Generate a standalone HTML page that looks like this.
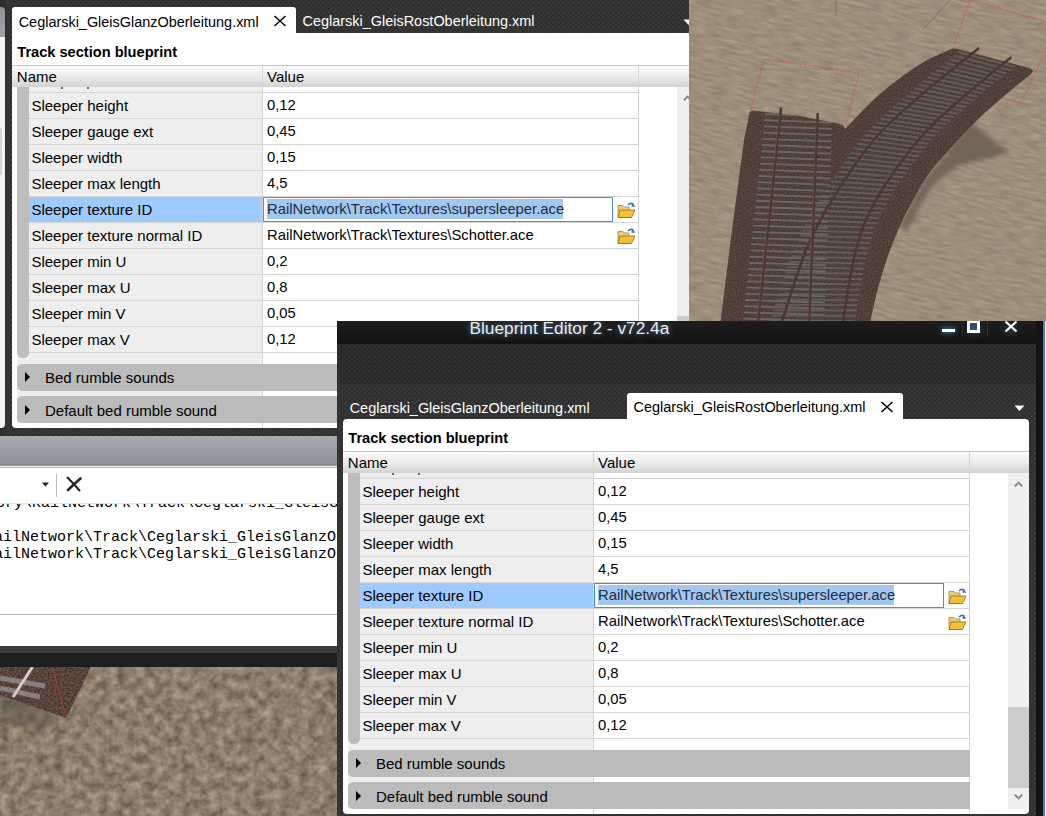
<!DOCTYPE html>
<html><head><meta charset="utf-8"><style>
html,body{margin:0;padding:0;width:1046px;height:816px;overflow:hidden;background:#2d2d2d;}
body div{position:absolute;}
.t{white-space:pre;font-family:"Liberation Sans",sans-serif;}
</style></head><body>
<div style="left:0px;top:0px;width:1046px;height:816px;background:#2d2d2d;"></div><div style="left:0px;top:7px;width:5px;height:30px;background:linear-gradient(#8e9399,#a0a4aa);border-radius:0 4px 0 0;"></div><div style="left:0px;top:37px;width:5px;height:391px;background:#f4f4f4;border-radius:0 0 4px 0;"></div><div style="left:0px;top:128px;width:2px;height:47px;background:#d6d6d6;"></div><div style="left:0;top:0;width:690px;height:435px;overflow:hidden"><div style="left:6px;top:-65px;width:699px;height:509px;background-color:#2c2c2c;background-image:radial-gradient(circle,#3b3b3b 0.9px,transparent 1.7px),radial-gradient(circle,#3b3b3b 0.9px,transparent 1.7px);background-size:5px 5px;background-position:0 0,2.5px 2.5px;"></div><div style="left:6px;top:-42px;width:699px;height:40px;background-color:#262626;background-image:radial-gradient(circle,#333 0.9px,transparent 1.7px),radial-gradient(circle,#333 0.9px,transparent 1.7px);background-size:5px 5px;background-position:0 0,2.5px 2.5px;"></div><div style="left:705px;top:-65px;width:7px;height:509px;background:#131313;"></div><div style="left:6px;top:-65px;width:699px;height:23px;background:linear-gradient(#1d1d1d,#121212);"></div><div class="t" style="left:138.5px;top:-65.94px;font-size:17.3px;line-height:17.3px;font-weight:400;color:#ececec;font-family:'Liberation Sans';text-shadow:0 0 6px #5a8ab8;">Blueprint Editor 2 - v72.4a</div><div style="left:604px;top:-65px;width:90px;height:21px;background:radial-gradient(ellipse 12px 9px at 15% 45%,rgba(60,100,140,0.35),transparent),radial-gradient(ellipse 12px 9px at 45% 45%,rgba(60,100,140,0.35),transparent),radial-gradient(ellipse 12px 9px at 84% 40%,rgba(60,100,140,0.3),transparent);"></div><div style="left:611px;top:-57.5px;width:13px;height:3.0px;background:#fff;box-shadow:0 0 4px #4a7aa8;"></div><div style="left:636px;top:-66px;width:13px;height:13px;border:3px solid #fff;box-sizing:border-box;background:#2e4d6a;"></div><div style="left:631px;top:-65px;width:1px;height:15px;background:#2a2a2a;"></div><div style="left:656px;top:-65px;width:1px;height:15px;background:#333;"></div><svg style="position:absolute;left:673px;top:-66px" width="14" height="13" viewBox="0 0 14 13"><path d="M1.5 1.5 L12.5 11.5 M12.5 1.5 L1.5 11.5" stroke="#fff" stroke-width="2.2"/></svg><div style="left:12px;top:7px;width:284px;height:27px;background:#fff;border-radius:3px 3px 0 0;"></div><div class="t" style="left:18.7px;top:14.77px;font-size:14.45px;line-height:14.45px;font-weight:400;color:#000;font-family:'Liberation Sans';">Ceglarski_GleisGlanzOberleitung.xml</div><svg style="position:absolute;left:273px;top:15px" width="14" height="12" viewBox="0 0 14 12"><path d="M1.5 1 L12.5 11 M12.5 1 L1.5 11" stroke="#000" stroke-width="1.5"/></svg><div class="t" style="left:302.6px;top:14.37px;font-size:14.45px;line-height:14.45px;font-weight:400;color:#fff;font-family:'Liberation Sans';">Ceglarski_GleisRostOberleitung.xml</div><svg style="position:absolute;left:683px;top:19px" width="11" height="7" viewBox="0 0 11 7"><path d="M0.5 0.5 L10.5 0.5 L5.5 6 Z" fill="#fff"/></svg><div style="left:12px;top:33px;width:686px;height:395px;background:#fff;border-radius:0 4px 4px 4px;"></div><div class="t" style="left:17.3px;top:44.64px;font-size:14.6px;line-height:14.6px;font-weight:700;color:#000;font-family:'Liberation Sans';">Track section blueprint</div><div style="left:12px;top:65px;width:686px;height:1px;background:#c9c9c9;"></div><div style="left:12px;top:66px;width:686px;height:20.5px;background:linear-gradient(#fbfbfb 0%,#ececec 50%,#d2d2d2 100%);"></div><div style="left:262px;top:66px;width:1px;height:20px;background:#d6d6d6;"></div><div class="t" style="left:16.8px;top:69.10px;font-size:15px;line-height:15px;font-weight:400;color:#000;font-family:'Liberation Sans';">Name</div><div class="t" style="left:267px;top:69.10px;font-size:15px;line-height:15px;font-weight:400;color:#000;font-family:'Liberation Sans';">Value</div><div style="left:638px;top:66px;width:1px;height:20px;background:#d6d6d6;"></div><div style="left:29px;top:86.5px;width:233px;height:336.5px;background:#eeeeee;"></div><div style="left:17px;top:357px;width:12px;height:66px;background:#eeeeee;"></div><div style="left:262px;top:86.5px;width:1px;height:341.5px;background:#d4d4d4;"></div><div style="left:638px;top:86.5px;width:1px;height:341.5px;background:#d4d4d4;"></div><div style="left:60.5px;top:86.5px;width:2.0px;height:2.0px;background:#333;border-radius:1px;"></div><div style="left:86.5px;top:86.5px;width:2.0px;height:2.0px;background:#333;border-radius:1px;"></div><div style="left:29px;top:92px;width:609px;height:1px;background:#d6d6d6;"></div><div style="left:29px;top:118px;width:609px;height:1px;background:#d6d6d6;"></div><div style="left:29px;top:144px;width:609px;height:1px;background:#d6d6d6;"></div><div style="left:29px;top:170px;width:609px;height:1px;background:#d6d6d6;"></div><div style="left:29px;top:196px;width:609px;height:1px;background:#d6d6d6;"></div><div style="left:29px;top:222px;width:609px;height:1px;background:#d6d6d6;"></div><div style="left:29px;top:248px;width:609px;height:1px;background:#d6d6d6;"></div><div style="left:29px;top:274px;width:609px;height:1px;background:#d6d6d6;"></div><div style="left:29px;top:300px;width:609px;height:1px;background:#d6d6d6;"></div><div style="left:29px;top:326px;width:609px;height:1px;background:#d6d6d6;"></div><div style="left:29px;top:352px;width:609px;height:1px;background:#d6d6d6;"></div><div style="left:29px;top:197px;width:233px;height:25px;background:#9ecbfd;"></div><div class="t" style="left:31.4px;top:97.50px;font-size:15px;line-height:15px;font-weight:400;color:#000;font-family:'Liberation Sans';">Sleeper height</div><div class="t" style="left:267px;top:97.77px;font-size:14.8px;line-height:14.8px;font-weight:400;color:#000;font-family:'Liberation Sans';">0,12</div><div class="t" style="left:31.4px;top:123.50px;font-size:15px;line-height:15px;font-weight:400;color:#000;font-family:'Liberation Sans';">Sleeper gauge ext</div><div class="t" style="left:267px;top:123.77px;font-size:14.8px;line-height:14.8px;font-weight:400;color:#000;font-family:'Liberation Sans';">0,45</div><div class="t" style="left:31.4px;top:149.50px;font-size:15px;line-height:15px;font-weight:400;color:#000;font-family:'Liberation Sans';">Sleeper width</div><div class="t" style="left:267px;top:149.77px;font-size:14.8px;line-height:14.8px;font-weight:400;color:#000;font-family:'Liberation Sans';">0,15</div><div class="t" style="left:31.4px;top:175.50px;font-size:15px;line-height:15px;font-weight:400;color:#000;font-family:'Liberation Sans';">Sleeper max length</div><div class="t" style="left:267px;top:175.77px;font-size:14.8px;line-height:14.8px;font-weight:400;color:#000;font-family:'Liberation Sans';">4,5</div><div class="t" style="left:31.4px;top:201.50px;font-size:15px;line-height:15px;font-weight:400;color:#000;font-family:'Liberation Sans';">Sleeper texture ID</div><div style="left:263px;top:197px;width:350px;height:25px;border:1px solid #3f8ef0;box-sizing:border-box;background:#fff;"></div><div style="left:267px;top:198.5px;width:295.5px;height:20.0px;background:#a3c7ed;"></div><div class="t" style="left:267px;top:201.77px;font-size:14.8px;line-height:14.8px;font-weight:400;color:#1b2c48;font-family:'Liberation Sans';">RailNetwork\Track\Textures\supersleeper.ace</div><svg style="position:absolute;left:616.5px;top:201.5px" width="19" height="17" viewBox="0 0 19 17">
<path d="M1 3.5 L6 3.5 L7.5 5 L12 5 L12 15.5 L1 15.5 Z" fill="#e9cf72" stroke="#9a8550" stroke-width="0.8"/>
<path d="M3 8 L18 8 L14.5 15.5 L1 15.5 Z" fill="#f2c030" stroke="#8a6d2a" stroke-width="0.8"/>
<path d="M11 3 Q14 0 16.5 2.5" fill="none" stroke="#4f6fa8" stroke-width="1.6"/>
<path d="M15 1 L18.5 4.5 L14.5 5 Z" fill="#4f6fa8"/>
</svg><div class="t" style="left:31.4px;top:227.50px;font-size:15px;line-height:15px;font-weight:400;color:#000;font-family:'Liberation Sans';">Sleeper texture normal ID</div><div class="t" style="left:267px;top:227.77px;font-size:14.8px;line-height:14.8px;font-weight:400;color:#000;font-family:'Liberation Sans';">RailNetwork\Track\Textures\Schotter.ace</div><svg style="position:absolute;left:616.5px;top:227.5px" width="19" height="17" viewBox="0 0 19 17">
<path d="M1 3.5 L6 3.5 L7.5 5 L12 5 L12 15.5 L1 15.5 Z" fill="#e9cf72" stroke="#9a8550" stroke-width="0.8"/>
<path d="M3 8 L18 8 L14.5 15.5 L1 15.5 Z" fill="#f2c030" stroke="#8a6d2a" stroke-width="0.8"/>
<path d="M11 3 Q14 0 16.5 2.5" fill="none" stroke="#4f6fa8" stroke-width="1.6"/>
<path d="M15 1 L18.5 4.5 L14.5 5 Z" fill="#4f6fa8"/>
</svg><div class="t" style="left:31.4px;top:253.50px;font-size:15px;line-height:15px;font-weight:400;color:#000;font-family:'Liberation Sans';">Sleeper min U</div><div class="t" style="left:267px;top:253.77px;font-size:14.8px;line-height:14.8px;font-weight:400;color:#000;font-family:'Liberation Sans';">0,2</div><div class="t" style="left:31.4px;top:279.50px;font-size:15px;line-height:15px;font-weight:400;color:#000;font-family:'Liberation Sans';">Sleeper max U</div><div class="t" style="left:267px;top:279.77px;font-size:14.8px;line-height:14.8px;font-weight:400;color:#000;font-family:'Liberation Sans';">0,8</div><div class="t" style="left:31.4px;top:305.50px;font-size:15px;line-height:15px;font-weight:400;color:#000;font-family:'Liberation Sans';">Sleeper min V</div><div class="t" style="left:267px;top:305.77px;font-size:14.8px;line-height:14.8px;font-weight:400;color:#000;font-family:'Liberation Sans';">0,05</div><div class="t" style="left:31.4px;top:331.50px;font-size:15px;line-height:15px;font-weight:400;color:#000;font-family:'Liberation Sans';">Sleeper max V</div><div class="t" style="left:267px;top:331.77px;font-size:14.8px;line-height:14.8px;font-weight:400;color:#000;font-family:'Liberation Sans';">0,12</div><div style="left:17px;top:86.5px;width:12px;height:271.0px;background:#bdbdbd;border-radius:0 0 5px 5px;"></div><div style="left:17px;top:363.5px;width:622px;height:27.5px;background:#bbbbbb;border-radius:5px 0 0 5px;"></div><svg style="position:absolute;left:24.8px;top:372.25px" width="6" height="10" viewBox="0 0 6 10"><path d="M0 0 L5 5 L0 10 Z" fill="#000"/></svg><div class="t" style="left:45px;top:370.35px;font-size:15px;line-height:15px;font-weight:400;color:#000;font-family:'Liberation Sans';">Bed rumble sounds</div><div style="left:17px;top:396.3px;width:622px;height:26.399999999999977px;background:#bbbbbb;border-radius:5px 0 0 5px;"></div><svg style="position:absolute;left:24.8px;top:404.5px" width="6" height="10" viewBox="0 0 6 10"><path d="M0 0 L5 5 L0 10 Z" fill="#000"/></svg><div class="t" style="left:45px;top:402.60px;font-size:15px;line-height:15px;font-weight:400;color:#000;font-family:'Liberation Sans';">Default bed rumble sound</div><div style="left:677px;top:86.5px;width:21px;height:336.5px;background:#f0f0f0;"></div><div style="left:677px;top:316px;width:21px;height:81px;background:#cdcdcd;"></div><svg style="position:absolute;left:682px;top:94px" width="11" height="8" viewBox="0 0 11 8"><path d="M1.8 6.2 L5.5 2.6 L9.2 6.2" fill="none" stroke="#8a8a8a" stroke-width="2"/></svg><svg style="position:absolute;left:682px;top:407px" width="11" height="8" viewBox="0 0 11 8"><path d="M1.8 1.8 L5.5 5.4 L9.2 1.8" fill="none" stroke="#8a8a8a" stroke-width="2"/></svg></div><svg style="position:absolute;left:689px;top:0" width="357" height="321" viewBox="689 0 357 321"><defs><filter id="nz" x="0" y="0" width="100%" height="100%" color-interpolation-filters="sRGB"><feTurbulence type="fractalNoise" baseFrequency="0.06 0.35" numOctaves="4" seed="3"/><feColorMatrix values="0.17 0 0 0 0.53  0.17 0 0 0 0.47  0.16 0 0 0 0.405  0 0 0 0 1"/></filter><filter id="nz2" x="0" y="0" width="100%" height="100%" color-interpolation-filters="sRGB"><feTurbulence type="fractalNoise" baseFrequency="0.8" numOctaves="2" seed="5"/><feColorMatrix values="0.2 0 0 0 0.22  0.2 0 0 0 0.15  0.2 0 0 0 0.125  0 0 0 0 1"/></filter><filter id="blur3" x="-20%" y="-20%" width="140%" height="140%"><feGaussianBlur stdDeviation="2.5"/></filter><clipPath id="bedclip"><path d="M720.6 321 L732 230 L744 140 L749.5 113 Q750.5 110.3 753 110.5 L800 116 L838 123.5 Q845 125 845 129 L846 128 C851.6 122.4 867.3 105.0 879.4 94.5 C891.5 84.0 907.0 72.5 918.8 65.0 C930.6 57.5 944.8 52.1 950.0 49.5 Q952.3 48 956 48.6 L1027 67.5 Q1036 70 1031 74 C1026.0 78.1 1010.7 90.3 1001.2 98.6 C991.7 106.8 982.7 114.8 973.8 123.5 C964.9 132.2 955.5 142.7 948.0 151.0 C940.5 159.3 934.5 165.6 928.8 173.5 C923.1 181.4 918.4 190.7 914.0 198.5 C909.6 206.3 906.7 211.0 902.4 220.6 C898.1 230.2 892.1 244.6 888.0 256.0 C883.9 267.4 880.7 278.2 877.8 289.0 C874.9 299.8 871.6 315.7 870.4 321.0 Z"/></clipPath></defs><g transform="rotate(12 868 160)"><rect x="600" y="-120" width="540" height="560" filter="url(#nz)"/></g><path d="M970 122 L1009.8 152.6 L956.6 166.3 L931.8 186.8 L918.5 208.8 L906.8 232 L900 225 L914 198.5 L928.8 173.5 L948 151 Z" fill="#6a5f52" opacity="0.85" filter="url(#blur3)"/><g stroke="#d84848" stroke-width="1" fill="none" opacity="0.7" stroke-dasharray="3 1.5"><path d="M764 59 L750.5 111"/><path d="M764 59 L859 73 L846 125"/><path d="M970 0 L953 47"/><path d="M970 0 L1046 22"/><path d="M1046 50 L1021 103 L1001 98"/></g><path d="M950 0 L922.7 30" stroke="#5a5048" stroke-width="0.8" opacity="0.6"/><path d="M836 0 L836 16" stroke="#5a5048" stroke-width="0.8" opacity="0.5"/><g clip-path="url(#bedclip)"><rect x="690" y="0" width="356" height="321" filter="url(#nz2)"/><path d="M765.3 114.0 L832.3 116.5 M764.6 120.2 L832.1 122.7 M764.0 126.4 L831.8 128.9 M763.3 132.6 L831.6 135.1 M762.6 138.8 L831.3 141.3 M762.0 145.0 L831.1 147.5 M761.3 151.2 L830.8 153.7 M760.6 157.4 L830.6 159.9 M759.9 163.6 L830.3 166.1 M759.3 169.8 L830.1 172.3 M758.6 176.0 L829.8 178.5 M757.9 182.2 L829.6 184.7 M757.3 188.4 L829.3 190.9 M756.6 194.6 L829.1 197.1 M755.9 200.8 L828.8 203.3 M755.2 207.0 L828.6 209.5 M754.6 213.2 L828.3 215.7 M753.9 219.4 L828.1 221.9 M753.2 225.6 L827.8 228.1 M752.6 231.8 L827.6 234.3 M751.9 238.0 L827.3 240.5 M751.2 244.2 L827.1 246.7 M750.5 250.4 L826.8 252.9 M749.9 256.6 L826.6 259.1 M749.2 262.8 L826.3 265.3 M748.5 269.0 L826.1 271.5 M747.9 275.2 L825.8 277.7 M747.2 281.4 L825.6 283.9 M746.5 287.6 L825.3 290.1 M745.8 293.8 L825.1 296.3 M745.2 300.0 L824.8 302.5 M744.5 306.2 L824.6 308.7 M743.8 312.4 L824.3 314.9 M743.2 318.6 L824.1 321.1" stroke="#707374" stroke-width="1.8" opacity="0.8"/><path d="M967.4 44.8 L1023.0 60.2 M963.0 48.4 L1018.9 63.5 M958.6 52.0 L1014.8 66.8 M954.1 55.6 L1010.7 70.1 M949.7 59.2 L1006.5 73.3 M945.3 62.8 L1002.4 76.6 M940.8 66.4 L998.3 79.9 M936.4 70.0 L994.2 83.2 M932.0 73.6 L990.2 86.6 M927.6 77.3 L986.1 89.9 M923.2 80.9 L982.0 93.3 M918.9 84.6 L978.0 96.7 M914.5 88.3 L974.0 100.1 M910.2 92.0 L970.0 103.6 M905.9 95.8 L966.0 107.0 M901.7 99.6 L962.0 110.4 M897.4 103.3 L958.0 113.8 M893.1 107.1 L954.1 117.2 M888.9 110.9 L950.1 120.8 M884.7 114.8 L946.3 124.4 M880.5 118.7 L942.5 128.1 M876.4 122.6 L938.8 131.9 M872.5 126.7 L935.3 135.8 M868.6 130.8 L931.8 139.8 M864.8 135.0 L928.4 143.8 M861.1 139.4 L925.1 147.9 M857.5 143.8 L921.8 152.1 M854.0 148.3 L918.6 156.2 M850.6 152.9 L915.4 160.4 M847.3 157.6 L912.2 164.6 M844.0 162.2 L909.1 168.8 M840.7 167.0 L906.1 173.0 M837.6 171.7 L903.0 177.3 M834.4 176.5 L900.0 181.7 M831.3 181.3 L897.1 186.0 M828.2 186.1 L894.2 190.4 M825.2 191.0 L891.4 194.8 M822.2 195.8 L888.7 199.4 M819.2 200.7 L886.1 203.9 M816.3 205.6 L883.6 208.6 M813.4 210.4 L881.2 213.3 M810.6 215.3 L878.9 218.1 M807.8 220.3 L876.8 223.0 M805.1 225.3 L874.9 227.9 M802.6 230.4 L873.2 232.9 M800.2 235.5 L871.6 238.0 M797.8 240.6 L870.0 243.1 M795.6 245.8 L868.6 248.2 M793.4 251.1 L867.2 253.3 M791.4 256.4 L866.0 258.4 M789.4 261.7 L864.9 263.6 M787.5 267.0 L863.8 268.8 M785.7 272.4 L862.8 274.0 M783.9 277.8 L861.9 279.2 M782.1 283.2 L861.0 284.4 M780.3 288.6 L860.1 289.6 M778.6 294.0 L859.2 294.9 M776.9 299.4 L858.4 300.1 M775.2 304.8 L857.6 305.3 M773.5 310.2 L856.7 310.5 M771.8 315.6 L855.9 315.8 M770.0 321.0 L855.0 321.0" stroke="#656869" stroke-width="1.9" opacity="0.75"/></g><g stroke="#4e3631" stroke-width="2.6" fill="none"><path d="M781 107.6 L758 321"/><path d="M817.6 113 L809 321"/><path d="M979 48 C969.2 56.0 937.5 80.7 920.0 96.0 C902.5 111.3 888.5 122.7 873.8 140.0 C859.1 157.3 843.3 181.7 832.0 200.0 C820.7 218.3 814.3 229.8 806.0 250.0 C797.7 270.2 786.0 309.2 782.0 321.0"/><path d="M1011.4 57 C1003.2 63.8 977.2 84.5 962.0 98.0 C946.8 111.5 934.3 121.0 920.0 138.0 C905.7 155.0 886.7 181.3 876.0 200.0 C865.3 218.7 861.5 229.8 856.0 250.0 C850.5 270.2 845.2 309.2 843.0 321.0"/></g><g stroke="#7a5e55" stroke-width="0.8" fill="none" opacity="0.6"><path d="M780 107.6 L757 321"/><path d="M816.6 113 L808 321"/></g></svg><div style="left:0px;top:436px;width:337px;height:31px;background:linear-gradient(#a7abb1,#8c9097);"></div><div style="left:0px;top:466px;width:337px;height:1px;background:#f4f4f4;"></div><div style="left:0px;top:467px;width:337px;height:1px;background:#b4b4b4;"></div><div style="left:0px;top:468px;width:337px;height:178px;background:#fff;"></div><svg style="position:absolute;left:42px;top:482px" width="7" height="5" viewBox="0 0 7 5"><path d="M0 0.5 L7 0.5 L3.5 4.5 Z" fill="#222"/></svg><div style="left:56px;top:474px;width:1px;height:23px;background:#bbb;"></div><svg style="position:absolute;left:65px;top:476px" width="17" height="17" viewBox="0 0 17 17"><path d="M2.5 1.5 Q9 8 14.5 14.5" fill="none" stroke="#222" stroke-width="2" stroke-linecap="round"/><path d="M15.5 2.5 Q9 8 3 14" fill="none" stroke="#222" stroke-width="2.6" stroke-linecap="round"/></svg><div style="left:0;top:503px;width:337px;height:111px;overflow:hidden"><div class="t" style="left:-4px;top:-7.20px;font-size:15px;line-height:15px;font-weight:400;color:#000;font-family:'Liberation Mono';">ory\RailNetwork\Track\Ceglarski_GleisGlanzOberleitung.xml</div><div class="t" style="left:-15px;top:26.80px;font-size:15px;line-height:15px;font-weight:400;color:#000;font-family:'Liberation Mono';">RailNetwork\Track\Ceglarski_GleisGlanzOberleitung.xml</div><div class="t" style="left:-15px;top:43.80px;font-size:15px;line-height:15px;font-weight:400;color:#000;font-family:'Liberation Mono';">RailNetwork\Track\Ceglarski_GleisGlanzOberleitung.xml</div></div><div style="left:0px;top:503px;width:337px;height:1px;background:#e4e4e4;"></div><div style="left:0px;top:614px;width:337px;height:1px;background:#b8b8b8;"></div><div style="left:0px;top:646px;width:337px;height:7px;background:#3b3b3b;"></div><div style="left:0px;top:653px;width:337px;height:14px;background:#1e1e1e;"></div><svg style="position:absolute;left:0;top:667px" width="337" height="149" viewBox="0 667 337 149"><defs><filter id="tz" x="0" y="0" width="100%" height="100%" color-interpolation-filters="sRGB"><feTurbulence type="fractalNoise" baseFrequency="0.11" numOctaves="4" seed="11"/><feColorMatrix values="0.38 0 0 0 0.36  0.38 0 0 0 0.30  0.34 0 0 0 0.255  0 0 0 0 1"/></filter><filter id="tz3" x="0" y="0" width="100%" height="100%" color-interpolation-filters="sRGB"><feTurbulence type="fractalNoise" baseFrequency="0.6" numOctaves="2" seed="9"/><feColorMatrix values="0.35 0 0 0 0.17  0.35 0 0 0 0.085  0.35 0 0 0 0.055  0 0 0 0 1"/></filter><filter id="tblur"><feGaussianBlur stdDeviation="2.5"/></filter><clipPath id="tbc"><path d="M0 667 L91 667 L66 718 L0 695 Z"/></clipPath></defs><rect x="0" y="667" width="337" height="149" filter="url(#tz)"/><path d="M0 690 L45 710 L62 722 L40 730 L0 722 Z" fill="#5a5249" opacity="0.55" filter="url(#tblur)"/><g clip-path="url(#tbc)"><rect x="0" y="667" width="91" height="51" filter="url(#tz3)"/></g><path d="M0 678 L45 686 M0 688 L40 697" stroke="#9a9a98" stroke-width="5" opacity="0.7"/><path d="M32.5 667 L13 697" stroke="#d8c8c8" stroke-width="3"/><path d="M52 667 L66.6 718" stroke="#c03a3a" stroke-width="0.9" opacity="0.8"/></svg><div style="left:337px;top:321px;width:709px;height:495px;overflow:hidden"><div style="left:0px;top:0px;width:699px;height:509px;background-color:#2c2c2c;background-image:radial-gradient(circle,#3b3b3b 0.9px,transparent 1.7px),radial-gradient(circle,#3b3b3b 0.9px,transparent 1.7px);background-size:5px 5px;background-position:0 0,2.5px 2.5px;"></div><div style="left:0px;top:23px;width:699px;height:40px;background-color:#262626;background-image:radial-gradient(circle,#333 0.9px,transparent 1.7px),radial-gradient(circle,#333 0.9px,transparent 1.7px);background-size:5px 5px;background-position:0 0,2.5px 2.5px;"></div><div style="left:699px;top:0px;width:7px;height:509px;background:#131313;"></div><div style="left:0px;top:0px;width:699px;height:23px;background:linear-gradient(#1d1d1d,#121212);"></div><div class="t" style="left:132.5px;top:-0.94px;font-size:17.3px;line-height:17.3px;font-weight:400;color:#ececec;font-family:'Liberation Sans';text-shadow:0 0 6px #5a8ab8;">Blueprint Editor 2 - v72.4a</div><div style="left:598px;top:0px;width:90px;height:21px;background:radial-gradient(ellipse 12px 9px at 15% 45%,rgba(60,100,140,0.35),transparent),radial-gradient(ellipse 12px 9px at 45% 45%,rgba(60,100,140,0.35),transparent),radial-gradient(ellipse 12px 9px at 84% 40%,rgba(60,100,140,0.3),transparent);"></div><div style="left:605px;top:7.5px;width:13px;height:3.0px;background:#fff;box-shadow:0 0 4px #4a7aa8;"></div><div style="left:630px;top:-1px;width:13px;height:13px;border:3px solid #fff;box-sizing:border-box;background:#2e4d6a;"></div><div style="left:625px;top:0px;width:1px;height:15px;background:#2a2a2a;"></div><div style="left:650px;top:0px;width:1px;height:15px;background:#333;"></div><svg style="position:absolute;left:667px;top:-1px" width="14" height="13" viewBox="0 0 14 13"><path d="M1.5 1.5 L12.5 11.5 M12.5 1.5 L1.5 11.5" stroke="#fff" stroke-width="2.2"/></svg><div class="t" style="left:12.7px;top:79.77px;font-size:14.45px;line-height:14.45px;font-weight:400;color:#fff;font-family:'Liberation Sans';">Ceglarski_GleisGlanzOberleitung.xml</div><div style="left:290px;top:72px;width:276px;height:27px;background:#fff;border-radius:3px 3px 0 0;"></div><div class="t" style="left:296.6px;top:79.37px;font-size:14.45px;line-height:14.45px;font-weight:400;color:#000;font-family:'Liberation Sans';">Ceglarski_GleisRostOberleitung.xml</div><svg style="position:absolute;left:543px;top:80px" width="14" height="12" viewBox="0 0 14 12"><path d="M1.5 1 L12.5 11 M12.5 1 L1.5 11" stroke="#000" stroke-width="1.5"/></svg><svg style="position:absolute;left:677px;top:84px" width="11" height="7" viewBox="0 0 11 7"><path d="M0.5 0.5 L10.5 0.5 L5.5 6 Z" fill="#fff"/></svg><div style="left:6px;top:98px;width:686px;height:395px;background:#fff;border-radius:4px;"></div><div class="t" style="left:11.3px;top:109.64px;font-size:14.6px;line-height:14.6px;font-weight:700;color:#000;font-family:'Liberation Sans';">Track section blueprint</div><div style="left:6px;top:130px;width:686px;height:1px;background:#c9c9c9;"></div><div style="left:6px;top:131px;width:686px;height:20.5px;background:linear-gradient(#fbfbfb 0%,#ececec 50%,#d2d2d2 100%);"></div><div style="left:256px;top:131px;width:1px;height:20px;background:#d6d6d6;"></div><div class="t" style="left:10.8px;top:134.10px;font-size:15px;line-height:15px;font-weight:400;color:#000;font-family:'Liberation Sans';">Name</div><div class="t" style="left:261px;top:134.10px;font-size:15px;line-height:15px;font-weight:400;color:#000;font-family:'Liberation Sans';">Value</div><div style="left:632px;top:131px;width:1px;height:20px;background:#d6d6d6;"></div><div style="left:23px;top:151.5px;width:233px;height:336.5px;background:#eeeeee;"></div><div style="left:11px;top:422px;width:12px;height:66px;background:#eeeeee;"></div><div style="left:256px;top:151.5px;width:1px;height:341.5px;background:#d4d4d4;"></div><div style="left:632px;top:151.5px;width:1px;height:341.5px;background:#d4d4d4;"></div><div style="left:54.5px;top:151.5px;width:2.0px;height:2.0px;background:#333;border-radius:1px;"></div><div style="left:80.5px;top:151.5px;width:2.0px;height:2.0px;background:#333;border-radius:1px;"></div><div style="left:23px;top:157px;width:609px;height:1px;background:#d6d6d6;"></div><div style="left:23px;top:183px;width:609px;height:1px;background:#d6d6d6;"></div><div style="left:23px;top:209px;width:609px;height:1px;background:#d6d6d6;"></div><div style="left:23px;top:235px;width:609px;height:1px;background:#d6d6d6;"></div><div style="left:23px;top:261px;width:609px;height:1px;background:#d6d6d6;"></div><div style="left:23px;top:287px;width:609px;height:1px;background:#d6d6d6;"></div><div style="left:23px;top:313px;width:609px;height:1px;background:#d6d6d6;"></div><div style="left:23px;top:339px;width:609px;height:1px;background:#d6d6d6;"></div><div style="left:23px;top:365px;width:609px;height:1px;background:#d6d6d6;"></div><div style="left:23px;top:391px;width:609px;height:1px;background:#d6d6d6;"></div><div style="left:23px;top:417px;width:609px;height:1px;background:#d6d6d6;"></div><div style="left:23px;top:262px;width:233px;height:25px;background:#9ecbfd;"></div><div class="t" style="left:25.4px;top:162.50px;font-size:15px;line-height:15px;font-weight:400;color:#000;font-family:'Liberation Sans';">Sleeper height</div><div class="t" style="left:261px;top:162.77px;font-size:14.8px;line-height:14.8px;font-weight:400;color:#000;font-family:'Liberation Sans';">0,12</div><div class="t" style="left:25.4px;top:188.50px;font-size:15px;line-height:15px;font-weight:400;color:#000;font-family:'Liberation Sans';">Sleeper gauge ext</div><div class="t" style="left:261px;top:188.77px;font-size:14.8px;line-height:14.8px;font-weight:400;color:#000;font-family:'Liberation Sans';">0,45</div><div class="t" style="left:25.4px;top:214.50px;font-size:15px;line-height:15px;font-weight:400;color:#000;font-family:'Liberation Sans';">Sleeper width</div><div class="t" style="left:261px;top:214.77px;font-size:14.8px;line-height:14.8px;font-weight:400;color:#000;font-family:'Liberation Sans';">0,15</div><div class="t" style="left:25.4px;top:240.50px;font-size:15px;line-height:15px;font-weight:400;color:#000;font-family:'Liberation Sans';">Sleeper max length</div><div class="t" style="left:261px;top:240.77px;font-size:14.8px;line-height:14.8px;font-weight:400;color:#000;font-family:'Liberation Sans';">4,5</div><div class="t" style="left:25.4px;top:266.50px;font-size:15px;line-height:15px;font-weight:400;color:#000;font-family:'Liberation Sans';">Sleeper texture ID</div><div style="left:257px;top:262px;width:350px;height:25px;border:1px solid #3f8ef0;box-sizing:border-box;background:#fff;"></div><div style="left:261px;top:263.5px;width:295.5px;height:20.0px;background:#a3c7ed;"></div><div class="t" style="left:261px;top:266.77px;font-size:14.8px;line-height:14.8px;font-weight:400;color:#1b2c48;font-family:'Liberation Sans';">RailNetwork\Track\Textures\supersleeper.ace</div><svg style="position:absolute;left:610.5px;top:266.5px" width="19" height="17" viewBox="0 0 19 17">
<path d="M1 3.5 L6 3.5 L7.5 5 L12 5 L12 15.5 L1 15.5 Z" fill="#e9cf72" stroke="#9a8550" stroke-width="0.8"/>
<path d="M3 8 L18 8 L14.5 15.5 L1 15.5 Z" fill="#f2c030" stroke="#8a6d2a" stroke-width="0.8"/>
<path d="M11 3 Q14 0 16.5 2.5" fill="none" stroke="#4f6fa8" stroke-width="1.6"/>
<path d="M15 1 L18.5 4.5 L14.5 5 Z" fill="#4f6fa8"/>
</svg><div class="t" style="left:25.4px;top:292.50px;font-size:15px;line-height:15px;font-weight:400;color:#000;font-family:'Liberation Sans';">Sleeper texture normal ID</div><div class="t" style="left:261px;top:292.77px;font-size:14.8px;line-height:14.8px;font-weight:400;color:#000;font-family:'Liberation Sans';">RailNetwork\Track\Textures\Schotter.ace</div><svg style="position:absolute;left:610.5px;top:292.5px" width="19" height="17" viewBox="0 0 19 17">
<path d="M1 3.5 L6 3.5 L7.5 5 L12 5 L12 15.5 L1 15.5 Z" fill="#e9cf72" stroke="#9a8550" stroke-width="0.8"/>
<path d="M3 8 L18 8 L14.5 15.5 L1 15.5 Z" fill="#f2c030" stroke="#8a6d2a" stroke-width="0.8"/>
<path d="M11 3 Q14 0 16.5 2.5" fill="none" stroke="#4f6fa8" stroke-width="1.6"/>
<path d="M15 1 L18.5 4.5 L14.5 5 Z" fill="#4f6fa8"/>
</svg><div class="t" style="left:25.4px;top:318.50px;font-size:15px;line-height:15px;font-weight:400;color:#000;font-family:'Liberation Sans';">Sleeper min U</div><div class="t" style="left:261px;top:318.77px;font-size:14.8px;line-height:14.8px;font-weight:400;color:#000;font-family:'Liberation Sans';">0,2</div><div class="t" style="left:25.4px;top:344.50px;font-size:15px;line-height:15px;font-weight:400;color:#000;font-family:'Liberation Sans';">Sleeper max U</div><div class="t" style="left:261px;top:344.77px;font-size:14.8px;line-height:14.8px;font-weight:400;color:#000;font-family:'Liberation Sans';">0,8</div><div class="t" style="left:25.4px;top:370.50px;font-size:15px;line-height:15px;font-weight:400;color:#000;font-family:'Liberation Sans';">Sleeper min V</div><div class="t" style="left:261px;top:370.77px;font-size:14.8px;line-height:14.8px;font-weight:400;color:#000;font-family:'Liberation Sans';">0,05</div><div class="t" style="left:25.4px;top:396.50px;font-size:15px;line-height:15px;font-weight:400;color:#000;font-family:'Liberation Sans';">Sleeper max V</div><div class="t" style="left:261px;top:396.77px;font-size:14.8px;line-height:14.8px;font-weight:400;color:#000;font-family:'Liberation Sans';">0,12</div><div style="left:11px;top:151.5px;width:12px;height:271.0px;background:#bdbdbd;border-radius:0 0 5px 5px;"></div><div style="left:11px;top:428.5px;width:622px;height:27.5px;background:#bbbbbb;border-radius:5px 0 0 5px;"></div><svg style="position:absolute;left:18.8px;top:437.25px" width="6" height="10" viewBox="0 0 6 10"><path d="M0 0 L5 5 L0 10 Z" fill="#000"/></svg><div class="t" style="left:39px;top:435.35px;font-size:15px;line-height:15px;font-weight:400;color:#000;font-family:'Liberation Sans';">Bed rumble sounds</div><div style="left:11px;top:461.3px;width:622px;height:26.399999999999977px;background:#bbbbbb;border-radius:5px 0 0 5px;"></div><svg style="position:absolute;left:18.8px;top:469.5px" width="6" height="10" viewBox="0 0 6 10"><path d="M0 0 L5 5 L0 10 Z" fill="#000"/></svg><div class="t" style="left:39px;top:467.60px;font-size:15px;line-height:15px;font-weight:400;color:#000;font-family:'Liberation Sans';">Default bed rumble sound</div><div style="left:671px;top:151.5px;width:21px;height:336.5px;background:#f0f0f0;"></div><div style="left:671px;top:386px;width:21px;height:81px;background:#cdcdcd;"></div><svg style="position:absolute;left:676px;top:159px" width="11" height="8" viewBox="0 0 11 8"><path d="M1.8 6.2 L5.5 2.6 L9.2 6.2" fill="none" stroke="#8a8a8a" stroke-width="2"/></svg><svg style="position:absolute;left:676px;top:472px" width="11" height="8" viewBox="0 0 11 8"><path d="M1.8 1.8 L5.5 5.4 L9.2 1.8" fill="none" stroke="#8a8a8a" stroke-width="2"/></svg></div><div style="left:1043px;top:321px;width:2px;height:495px;background:#4a78d8;"></div><div style="left:1045px;top:321px;width:1px;height:495px;background:#fff;"></div>
</body></html>
